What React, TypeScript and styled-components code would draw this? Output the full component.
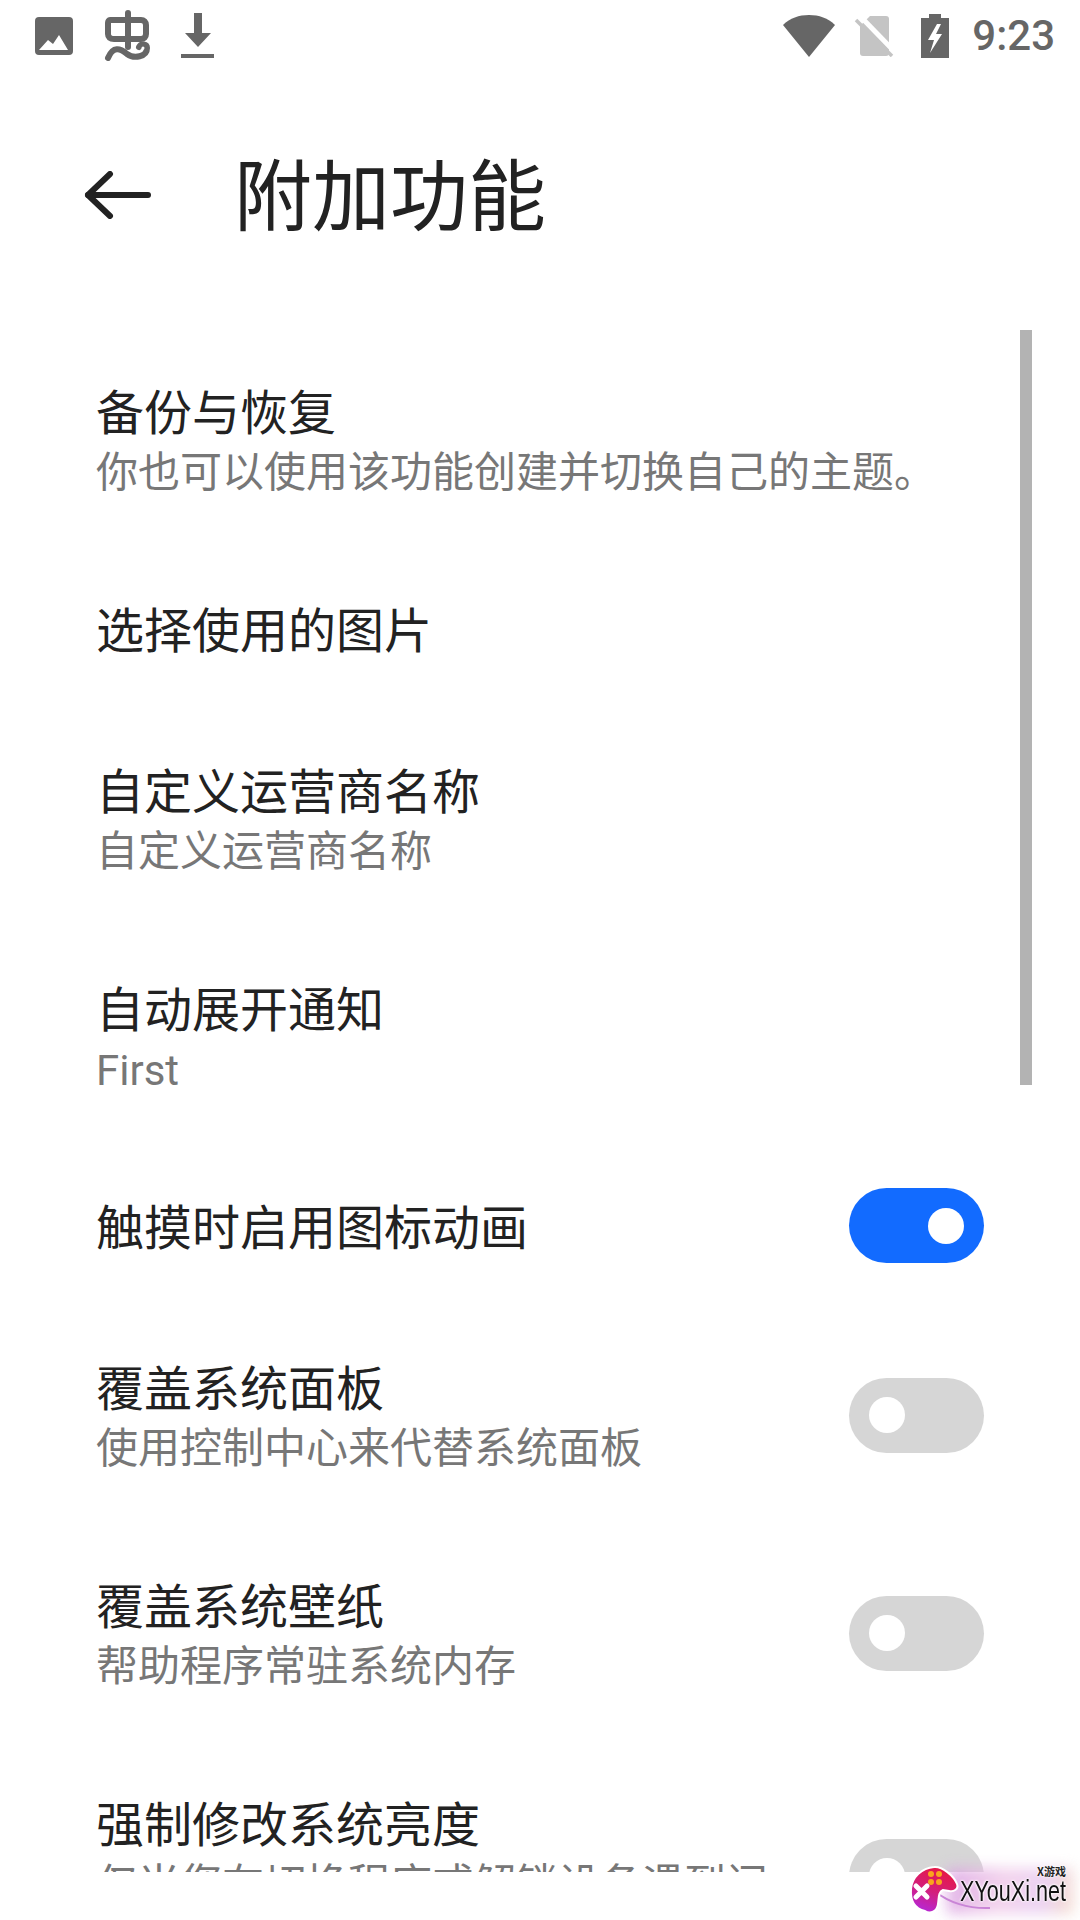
import React from "react";
import styled, { createGlobalStyle } from "styled-components";

const GlobalStyle = createGlobalStyle`
  html, body {
    margin: 0;
    padding: 0;
    background: #fff;
  }
  body {
    font-family: "Noto Sans CJK SC", "Noto Sans", sans-serif;
  }
`;

const Screen = styled.div`
  position: relative;
  width: 1080px;
  height: 1920px;
  overflow: hidden;
  background: #fff;
`;

const StatusBar = styled.div`
  display: flex;
  align-items: center;
  justify-content: space-between;
  height: 72px;
  padding: 0 25px 0 35px;
`;

const StatusGroup = styled.div<{ $gap: number }>`
  display: flex;
  align-items: center;
  gap: ${(p) => p.$gap}px;
`;

const BatterySlot = styled.div`
  display: flex;
  margin-left: 9px;
`;

const Clock = styled.span`
  margin-left: 5px;
  font-family: Roboto, sans-serif;
  font-size: 42px;
  line-height: 48px;
  font-weight: 500;
  color: #666;
`;

const Toolbar = styled.div`
  display: flex;
  align-items: center;
  height: 246px;
  margin-bottom: 12px;
  padding-left: 84px;
`;

const Title = styled.h1`
  margin: 0 0 8px 82px;
  font-size: 78px;
  line-height: 100px;
  font-weight: 400;
  color: #222;
`;

const List = styled.div`
  position: relative;
  height: 1542px;
  overflow: hidden;
`;

const ScrollThumb = styled.div`
  position: absolute;
  top: 0;
  right: 48px;
  width: 12px;
  height: 755px;
  background: #b3b3b3;
`;

const Row = styled.div`
  display: flex;
  align-items: center;
  justify-content: space-between;
  padding: 44px 96px 47px 96px;
`;

const RowText = styled.div<{ $narrow?: boolean }>`
  flex: ${(p) => (p.$narrow ? "0 0 680px" : "1")};
  min-width: 0;
`;

const RowTitle = styled.div`
  font-size: 48px;
  line-height: 70px;
  color: #222;
  white-space: nowrap;
`;

const RowSub = styled.div<{ $latin?: boolean }>`
  margin-bottom: ${(p) => (p.$latin ? 2 : 7)}px;
  padding-top: ${(p) => (p.$latin ? 5 : 0)}px;
  font-family: ${(p) => (p.$latin ? "Roboto, sans-serif" : "inherit")};
  font-size: 42px;
  line-height: 50px;
  color: #777;
`;

const Toggle = styled.div<{ $on?: boolean }>`
  display: flex;
  flex: none;
  align-items: center;
  justify-content: ${(p) => (p.$on ? "flex-end" : "flex-start")};
  box-sizing: border-box;
  width: 135px;
  height: 75px;
  margin: -8px 0 -11px;
  padding: 0 20px;
  border-radius: 38px;
  background: ${(p) => (p.$on ? "#126bff" : "#d6d6d6")};
`;

const Knob = styled.div`
  width: 36px;
  height: 36px;
  border-radius: 50%;
  background: #fff;
`;

const Watermark = styled.div`
  position: absolute;
  right: 0;
  bottom: 0;
  width: 175px;
  height: 58px;
`;

const Glow = styled.div`
  position: absolute;
  left: 42px;
  top: 6px;
  width: 126px;
  height: 46px;
  background: linear-gradient(100deg, #d89be0 0%, #f0c9e8 45%, #e6c7f0 75%, #f3d4c0 100%);
  filter: blur(7px);
  opacity: 0.8;
`;

const WatermarkName = styled.span`
  position: absolute;
  left: 55px;
  top: 14px;
  font-family: "Liberation Sans", Arial, sans-serif;
  font-size: 29px;
  line-height: 30px;
  color: #111;
  white-space: nowrap;
  transform: scaleX(0.745);
  transform-origin: left center;
  text-shadow: 0 0 3px #fff, 0 0 3px #fff, 0 0 2px #fff;
`;

const WatermarkTag = styled.span`
  position: absolute;
  right: 14px;
  top: 1px;
  font-size: 11px;
  line-height: 16px;
  font-weight: 700;
  color: #222;
  white-space: nowrap;
  text-shadow: 0 0 2px #fff, 0 0 2px #fff;
`;

const GamepadSvg = styled.svg`
  position: absolute;
  left: 3px;
  top: 0;
`;

function PictureIcon() {
  return (
    <svg width="38" height="38" viewBox="0 0 38 38">
      <rect width="38" height="38" rx="4" fill="#666" />
      <path d="M4 33 L13 23 L18 27 L24 18 L33 33 Z" fill="#fff" />
    </svg>
  );
}

function AppGlyphIcon() {
  return (
    <svg width="48" height="52" viewBox="0 0 48 52" fill="none" stroke="#666" strokeLinecap="round" strokeLinejoin="round">
      <path d="M25 3 V37" strokeWidth="6" />
      <path d="M7 10 H38 C41 10 43 12 43 15 V24 C43 27 41 29 38 29 H11 C7 29 5 27 5 24 V13 C5 11 6 10 7 10 Z" strokeWidth="6" />
      <path d="M5 48 C10 36 17 38 24 44 C31 49 44 47 44 38 C44 34 38 33 36 37" strokeWidth="6" />
      <circle cx="40" cy="38" r="1.5" fill="#fff" stroke="none" />
    </svg>
  );
}

function DownloadIcon() {
  return (
    <svg width="33" height="46" viewBox="0 0 33 46" fill="#666">
      <path d="M13 0 H21 V20 H30 L17 34 L4 20 H13 Z" />
      <rect x="0" y="41" width="33" height="4" />
    </svg>
  );
}

function WifiIcon() {
  return (
    <svg width="54" height="44" viewBox="0 0 54 44">
      <path d="M27 43 L1 11 C8 4 17 1 27 1 C37 1 46 4 53 11 Z" fill="#666" />
    </svg>
  );
}

function NoSimIcon() {
  return (
    <svg width="40" height="42" viewBox="0 0 40 42">
      <path d="M16 1 H32 C34 1 35 2 35 4 V38 C35 40 34 41 32 41 H9 C7 41 6 40 6 38 V11 Z" fill="#c4c4c4" />
      <path d="M6 1 L40 36" stroke="#fff" strokeWidth="5" />
      <path d="M2 5 L38 41" stroke="#c4c4c4" strokeWidth="3.5" />
    </svg>
  );
}

function BatteryIcon() {
  return (
    <svg width="28" height="44" viewBox="0 0 28 44">
      <path d="M8 0 H20 V4 H28 V44 H0 V4 H8 Z" fill="#666" />
      <path d="M16 10 L7 26 H13 L9 39 L21 20 H15 L20 10 Z" fill="#fff" />
    </svg>
  );
}

function BackArrow() {
  return (
    <svg width="68" height="48" viewBox="0 0 68 48" fill="none" stroke="#222" strokeWidth="6" strokeLinecap="round" strokeLinejoin="round">
      <path d="M64 24 H4" />
      <path d="M26 3 L4 24 L26 45" />
    </svg>
  );
}

function Gamepad() {
  return (
    <GamepadSvg width="90" height="58" viewBox="0 0 90 58">
      <defs>
        <linearGradient id="pad" x1="0.7" y1="0" x2="0.3" y2="1">
          <stop offset="0" stopColor="#e8173f" />
          <stop offset="0.55" stopColor="#d31f7c" />
          <stop offset="1" stopColor="#b627d8" />
        </linearGradient>
      </defs>
      <path d="M28 30 C40 40 60 47 82 46" fill="none" stroke="#c985d6" strokeWidth="2" />
      <path
        d="M26 5 C34 4 46 14 49 22 C51 27 46 30 41 29 L35 28 C30 30 31 36 30 42 C29 50 22 52 17 49 C8 47 2 40 3 27 C4 15 14 6 26 5 Z"
        fill="url(#pad)"
        stroke="#fff"
        strokeWidth="2"
      />
      <g fill="#f9a51e">
        <circle cx="23" cy="12" r="3" />
        <circle cx="31" cy="12" r="3" />
        <circle cx="23" cy="20" r="3" />
        <circle cx="31" cy="20" r="3" />
      </g>
      <path d="M8 24 L19 35 M19 24 L8 35" stroke="#fff" strokeWidth="5" strokeLinecap="round" />
    </GamepadSvg>
  );
}

type Item = {
  title: string;
  sub?: string;
  latin?: boolean;
  toggle?: "on" | "off";
};

const ITEMS: Item[] = [
  { title: "备份与恢复", sub: "你也可以使用该功能创建并切换自己的主题。" },
  { title: "选择使用的图片" },
  { title: "自定义运营商名称", sub: "自定义运营商名称" },
  { title: "自动展开通知", sub: "First", latin: true },
  { title: "触摸时启用图标动画", toggle: "on" },
  { title: "覆盖系统面板", sub: "使用控制中心来代替系统面板", toggle: "off" },
  { title: "覆盖系统壁纸", sub: "帮助程序常驻系统内存", toggle: "off" },
  { title: "强制修改系统亮度", sub: "仅当您在切换程序或解锁设备遇到问题时使用此功能", toggle: "off" },
];

export default function App() {
  return (
    <Screen>
      <GlobalStyle />
      <StatusBar>
        <StatusGroup $gap={30}>
          <PictureIcon />
          <AppGlyphIcon />
          <DownloadIcon />
        </StatusGroup>
        <StatusGroup $gap={18}>
          <WifiIcon />
          <NoSimIcon />
          <BatterySlot>
            <BatteryIcon />
          </BatterySlot>
          <Clock>9:23</Clock>
        </StatusGroup>
      </StatusBar>
      <Toolbar>
        <BackArrow />
        <Title>附加功能</Title>
      </Toolbar>
      <List>
        <ScrollThumb />
        {ITEMS.map((item) => (
          <Row key={item.title}>
            <RowText $narrow={!!item.toggle}>
              <RowTitle>{item.title}</RowTitle>
              {item.sub && <RowSub $latin={item.latin}>{item.sub}</RowSub>}
            </RowText>
            {item.toggle && (
              <Toggle $on={item.toggle === "on"}>
                <Knob />
              </Toggle>
            )}
          </Row>
        ))}
      </List>
      <Watermark>
        <Glow />
        <Gamepad />
        <WatermarkTag>X游戏</WatermarkTag>
        <WatermarkName>XYouXi.net</WatermarkName>
      </Watermark>
    </Screen>
  );
}
